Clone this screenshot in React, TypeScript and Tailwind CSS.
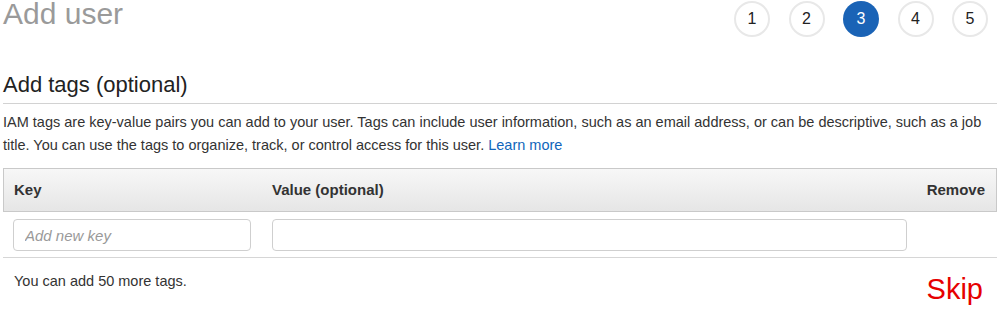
export default function App() {
  const steps = [1, 2, 3, 4, 5];
  const current = 3;

  return (
    <div
      className="w-[1000px] h-[309px] overflow-hidden bg-white px-[3px] text-[#222]"
      style={{ fontFamily: '"Liberation Sans", Arial, sans-serif' }}
    >
      {/* page header + wizard steps */}
      <div className="flex h-[72px] items-start justify-between">
        <h1 className="mt-[-1px] text-[30px] leading-[30px] font-normal text-[#9a9a9a]">
          Add user
        </h1>
        <ol className="mt-[1px] mr-[9px] flex gap-[18.5px]">
          {steps.map((s) => (
            <li
              key={s}
              className={
                s === current
                  ? "flex h-[36px] w-[36px] items-center justify-center rounded-full bg-[#1a63b6] text-[16px] text-white"
                  : "flex h-[36px] w-[36px] items-center justify-center rounded-full border-2 border-[#e8e8e8] text-[16px] text-[#222]"
              }
            >
              {s}
            </li>
          ))}
        </ol>
      </div>

      <h2 className="border-b border-[#d2d2d2] pb-[5px] text-[22px] leading-[26px] font-normal text-[#222]">
        Add tags (optional)
      </h2>

      <p className="mt-[7px] text-[14.5px] leading-[23px] text-[#333]">
        IAM tags are key-value pairs you can add to your user. Tags can include user information, such as an email
        address, or can be descriptive, such as a job title. You can use the tags to organize, track, or control access
        for this user.{" "}
        <a href="#" className="text-[#1166bb]">
          Learn more
        </a>
      </p>

      {/* tags table */}
      <div className="mt-[11px]">
        <div className="flex h-[44px] items-center border border-[#c9c9c9] bg-gradient-to-b from-[#f7f7f7] to-[#e6e6e6] text-[15px] font-bold text-[#333]">
          <div className="w-[258px] pl-[10px]">Key</div>
          <div className="flex-1 pl-[10px]">Value (optional)</div>
          <div className="pr-[11px]">Remove</div>
        </div>
        <div className="flex border-b border-[#d6d6d6] pt-[7px] pb-[6px]">
          <div className="w-[259px] pl-[10px]">
            <input
              placeholder="Add new key"
              className="h-[32px] w-[238px] rounded-[4px] border border-[#cfcfcf] pl-[11px] text-[15px] italic outline-none placeholder:text-[#999]"
            />
          </div>
          <div className="pl-[10px]">
            <input className="h-[32px] w-[635px] rounded-[4px] border border-[#cfcfcf] outline-none" />
          </div>
        </div>
      </div>

      <div className="flex items-start justify-between">
        <p className="mt-[13px] pl-[11px] text-[14.5px] leading-[20px] text-[#333]">You can add 50 more tags.</p>
        <button className="mt-[15px] mr-[14px] text-[29px] leading-[32px] text-[#e60000]">Skip</button>
      </div>
    </div>
  );
}
